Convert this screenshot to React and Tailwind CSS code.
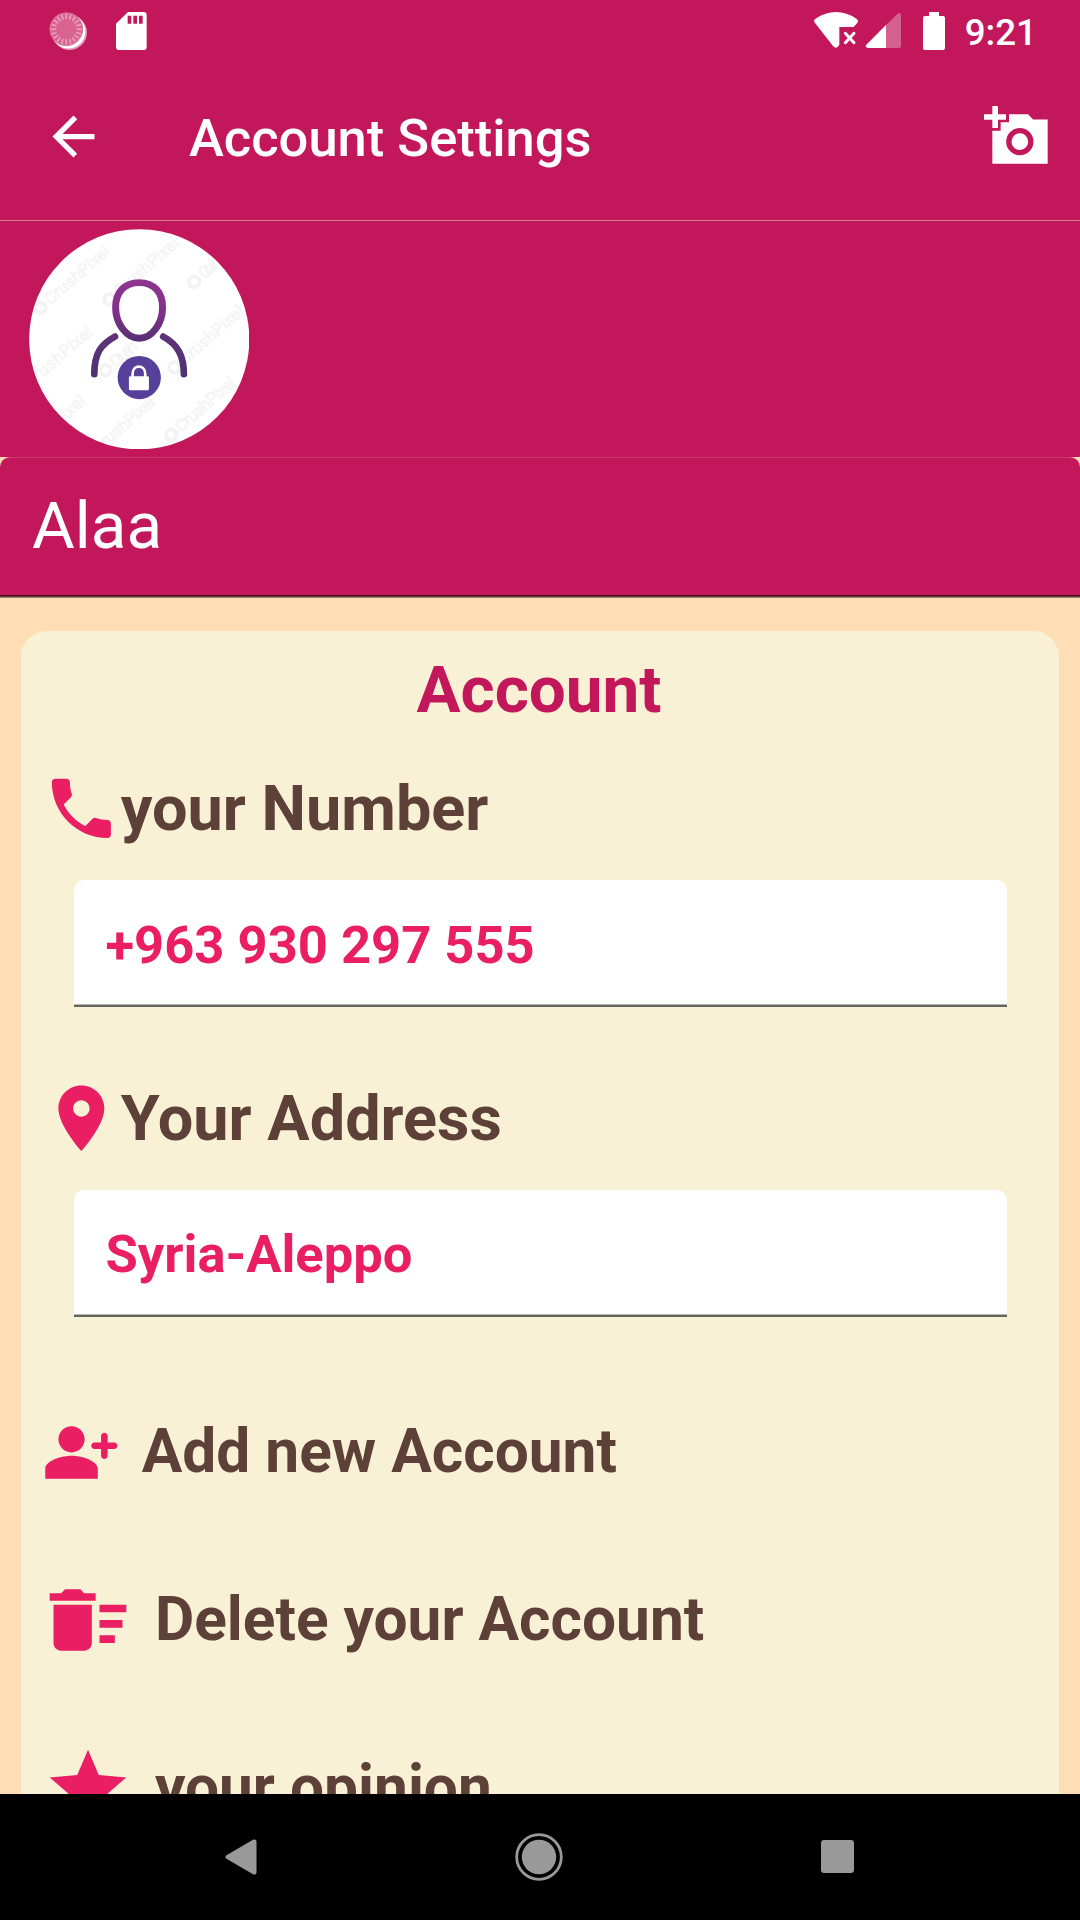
const PHONE =
  "M6.62 10.79c1.44 2.83 3.76 5.14 6.59 6.59l2.2-2.2c.27-.27.67-.36 1.02-.24 1.12.37 2.33.57 3.57.57.55 0 1 .45 1 1V20c0 .55-.45 1-1 1-9.39 0-17-7.61-17-17 0-.55.45-1 1-1h3.5c.55 0 1 .45 1 1 0 1.25.2 2.45.57 3.57.11.35.03.74-.25 1.02l-2.2 2.2z";
const PIN =
  "M12 2C8.13 2 5 5.13 5 9c0 5.25 7 13 7 13s7-7.75 7-13c0-3.87-3.13-7-7-7zm0 9.5c-1.38 0-2.5-1.12-2.5-2.5s1.12-2.5 2.5-2.5 2.5 1.12 2.5 2.5-1.12 2.5-2.5 2.5z";
const PERSON_ADD =
  "M13 8c0-2.21-1.79-4-4-4S5 5.79 5 8s1.79 4 4 4 4-1.79 4-4zM9 13c-2.67 0-8 1.34-8 4v3h16v-3c0-2.66-5.33-4-8-4zM20 9V7c0-.55-.45-1-1-1s-1 .45-1 1v2h-2c-.55 0-1 .45-1 1s.45 1 1 1h2v2c0 .55.45 1 1 1s1-.45 1-1v-2h2c.55 0 1-.45 1-1s-.45-1-1-1h-2z";
const DELETE_SWEEP =
  "M15 16h4v2h-4zM15 8h7v2h-7zM15 12h6v2h-6zM3 18c0 1.1.9 2 2 2h6c1.1 0 2-.9 2-2V8H3v10zM14 5h-3l-1-1H6L5 5H2v2h12V5z";
const STAR =
  "M12 17.27L18.18 21l-1.64-7.03L22 9.24l-7.19-.61L12 2 9.19 8.63 2 9.24l5.46 4.73L5.82 21z";

function Icon({ d, className }) {
  return (
    <svg viewBox="0 0 24 24" fill="currentColor" className={"shrink-0 " + className}>
      <path d={d} />
    </svg>
  );
}

function StatusBar() {
  const ticks = Array.from({ length: 20 }, (_, i) => i * 18);
  return (
    <div className="flex h-[63px] items-start pl-[49px] pr-[43px] pt-[11px]">
      <svg viewBox="0 0 39 40" className="h-[40px] w-[39px]">
        <circle cx="20.5" cy="21.5" r="17.5" fill="#fff" fillOpacity="0.55" />
        <circle cx="19.5" cy="20.5" r="17" fill="#fff" />
        <circle cx="17.3" cy="18.2" r="16.7" fill="#d8648f" />
        <g stroke="#e9a6c0" strokeWidth="1.5">
          {ticks.map((a) => (
            <line key={a} x1="17.3" y1="2.8" x2="17.3" y2="8" transform={`rotate(${a} 17.3 18.2)`} />
          ))}
        </g>
        <circle cx="17.3" cy="18.2" r="16.2" fill="none" stroke="#dd7ba0" strokeWidth="1" />
      </svg>
      <svg viewBox="345 34 99 120" className="ml-[27px] h-[40px] w-[33px]">
        <path
          fillRule="evenodd"
          fill="#fff"
          d="M384 37h46q10 0 10 10v94q0 10-10 10h-72q-10 0-10-10V72zM383 48v24h11V48zM400 48v24h11V48zM417 48v24h11V48z"
        />
      </svg>
      <div className="flex-1" />
      <svg viewBox="96 36 138 114" className="h-[38px] w-[46px]">
        <path
          fill="#fff"
          d="M99 66q0-4 5-7q29-20 61-20t61 20q5 3 5 7t-3 7l-10 11h-43v53q-5 9-10 9t-9-5l-54-69q-3-4-3-6z"
        />
        <path d="M193 103l26 28M219 103l-26 28" stroke="#fff" strokeWidth="9" strokeLinecap="round" />
      </svg>
      <svg viewBox="252 36 111 114" className="ml-[6px] h-[38px] w-[37px]">
        <path fill="#d4608d" d="M315 78l35-34q10-6 10 5v92q0 6-6 6h-39z" />
        <path fill="#fff" d="M315 78v69h-54q-10-1-5-10z" />
      </svg>
      <svg viewBox="426 33 72 120" className="ml-[20px] h-[40px] w-[24px]">
        <path
          fill="#fff"
          d="M447 36h30v12h12q6 0 6 6v90q0 6-6 6h-54q-6 0-6-6V54q0-6 6-6h12z"
        />
      </svg>
      <span className="ml-[19px] text-[36.75px] font-medium leading-[44px]">9:21</span>
    </div>
  );
}

function Toolbar() {
  return (
    <header className="flex h-[157px] items-center pb-[10px] pl-[42px] pr-[30px]">
      <Icon
        className="size-[63px]"
        d="M20 11H7.83l5.59-5.59L12 4l-8 8 8 8 1.41-1.41L7.83 13H20v-2z"
      />
      <h1 className="ml-[84px] mt-[2px] text-[52.5px] font-medium leading-[62px]">
        Account Settings
      </h1>
      <svg viewBox="606 312 204 186" className="-mt-[3px] ml-auto h-[62px] w-[68px]">
        <path
          fill="#fff"
          d="M637 318h17v25h24v16h-24v25h-17v-25h-25v-16h25zM687 343h57l15 15.500h44V491H637V392h25v-25h25z"
        />
        <circle cx="719.500" cy="425" r="33" fill="#fff" stroke="#c2185b" strokeWidth="16" />
      </svg>
    </header>
  );
}

// Faint lettering printed across the avatar image: start point, text and text length.
const MARKS = [
  [112, 300, true, "CrushPixel", 280],
  [320, 275, true, "CrushPixel", 280],
  [574, 222, true, "Crush", 110],
  [106, 502, false, "rushPixel", 220],
  [308, 488, true, "Crush", 130],
  [515, 480, true, "CrushPixel", 280],
  [190, 618, false, "ixel", 80],
  [308, 700, false, "rushPixel", 200],
  [505, 682, true, "CrushPixel", 260],
];

function Avatar() {
  return (
    <svg viewBox="87 56 662 662" className="size-[220.500px]">
      <defs>
        <linearGradient id="avatar-head" x1="0" y1="0" x2="0" y2="1">
          <stop offset="0" stopColor="#8d3390" />
          <stop offset="0.5" stopColor="#83308a" />
          <stop offset="1" stopColor="#5a3075" />
        </linearGradient>
        <linearGradient id="avatar-body" x1="0" y1="0" x2="0" y2="1">
          <stop offset="0" stopColor="#5f3278" />
          <stop offset="1" stopColor="#4e3274" />
        </linearGradient>
        <clipPath id="avatar-disc">
          <circle cx="418" cy="387" r="330" />
        </clipPath>
      </defs>
      <circle cx="418" cy="387" r="330.500" fill="#fff" />
      <g clipPath="url(#avatar-disc)">
        {MARKS.map(([x, y, dot, word, len]) => (
          <g key={x} transform={`translate(${x} ${y}) rotate(-41)`}>
            {dot && <circle cx="12" cy="0" r="16" fill="none" stroke="#f3f3f3" strokeWidth="12" />}
            <text
              x={dot ? 38 : 0}
              y="15"
              fill="#fff"
              stroke="#f3f3f3"
              strokeWidth="2.500"
              fontSize="50"
              textLength={len - (dot ? 38 : 0)}
            >
              {word}
            </text>
          </g>
        ))}
      </g>
      <path
        fill="none"
        stroke="url(#avatar-head)"
        strokeWidth="21"
        d="M418 217c-45 0-71 30-71 74 0 48 32 93 71 93s70-45 70-93c0-44-25-74-70-74z"
      />
      <g fill="none" stroke="url(#avatar-body)" strokeWidth="20" strokeLinecap="round">
        <path d="M345 379c-42 23-62 50-62 113" />
        <path d="M490 379c42 23 62 55 62 113" />
      </g>
      <circle cx="418" cy="502" r="65" fill="#56409a" />
      <path d="M398 500v-9c0-29 38-29 38 0v9" fill="none" stroke="#fff" strokeWidth="8" />
      <rect x="387" y="498" width="60" height="42" rx="4" fill="#fff" />
    </svg>
  );
}

function Field({ label, icon, value, textPad }) {
  return (
    <section>
      <div className="flex h-[79px] items-center text-[#e91e63]">
        <Icon d={icon} className="size-[78.75px]" />
        <h3 className="text-[63px] font-bold leading-[74px] text-[#5d4037]">{label}</h3>
      </div>
      <div className="ml-[31.500px] mr-[31.500px] mt-[32px] flex h-[127px] flex-col overflow-hidden rounded-t-[10px] bg-white">
        <div
          className={
            "flex flex-1 items-center pl-[32px] text-[52.5px] font-bold leading-[62px] text-[#e91e63] " +
            textPad
          }
        >
          {value}
        </div>
        <div className="h-px bg-[#b5b5b5]" />
        <div className="h-[2px] bg-[#65645f]" />
      </div>
    </section>
  );
}

function Action({ icon, label, size, row, line }) {
  return (
    <div className={"flex shrink-0 items-center gap-[21px] text-[#e91e63] " + row}>
      <Icon d={icon} className={size} />
      <span className={"whitespace-nowrap text-[60.4px] font-bold text-[#5d4037] " + line}>
        {label}
      </span>
    </div>
  );
}

function NavBar() {
  return (
    <nav className="flex h-[126px] shrink-0 items-center bg-black pl-[225px] text-[#999]">
      <svg viewBox="0 0 32 36" className="h-[36px] w-[32px]" fill="currentColor">
        <path d="M1.500 16.200 28 .8q3.500-1.200 3.500 2v30.400q0 3.200-3.500 2L1.500 19.800q-2.500-1.800 0-3.600z" />
      </svg>
      <svg viewBox="0 0 48 48" className="-mt-[1px] ml-[258px] size-[48px]">
        <circle cx="24" cy="24" r="22.300" fill="none" stroke="currentColor" strokeWidth="2.800" />
        <circle cx="24" cy="24" r="17.200" fill="currentColor" />
      </svg>
      <div className="-mt-[1px] ml-[258px] size-[33px] rounded-[3px] bg-[#999]" />
    </nav>
  );
}

export default function App() {
  return (
    <div className="flex h-[1920px] w-[1080px] flex-col overflow-hidden bg-[#ffdeb6] font-['Roboto',sans-serif]">
      <div className="bg-[#c2185b] text-white">
        <StatusBar />
        <Toolbar />
        <div className="h-px bg-[#d67b80]" />
        <div className="h-[236px] pl-[28.500px] pt-[7.500px]">
          <Avatar />
        </div>
      </div>
      <div className="flex h-[138px] shrink-0 items-center rounded-t-[10px] border-t border-[#cb3a68] bg-[#c2185b] pb-[2px] pl-[32px] text-[65.6px] leading-[77px] text-white">
        Alaa
      </div>
      <div className="h-px shrink-0 bg-[#4d0a24]" />
      <div className="h-px shrink-0 bg-[#5c3a3c]" />
      <div className="h-px shrink-0 bg-[#98856e]" />

      <main className="mx-[21px] mt-[32.500px] flex min-h-0 flex-1 flex-col overflow-hidden rounded-t-[26px] bg-[#f9f1d6] px-[21px] pt-[20.500px]">
        <h2 className="pr-[2px] text-center text-[65.6px] font-bold leading-[77px] text-[#c2185b]">
          Account
        </h2>
        <div className="mt-[41px] flex shrink-0 flex-col gap-[72px]">
          <Field label="your Number" icon={PHONE} value="+963 930 297 555" textPad="pt-[5px]" />
          <Field label="Your Address" icon={PIN} value="Syria-Aleppo" textPad="pt-[3px]" />
        </div>
        <Action
          icon={PERSON_ADD}
          label="Add new Account"
          size="size-[78.75px]"
          row="mt-[96px] h-[79px]"
          line="mb-[2px] leading-[70px]"
        />
        <Action
          icon={DELETE_SWEEP}
          label="Delete your Account"
          size="size-[92px]"
          row="mt-[82px] h-[92px]"
          line="leading-[70px]"
        />
        <Action
          icon={STAR}
          label="your opinion"
          size="size-[92px]"
          row="mt-[76px] h-[92px]"
          line="leading-[70px]"
        />
      </main>
      <NavBar />
    </div>
  );
}
